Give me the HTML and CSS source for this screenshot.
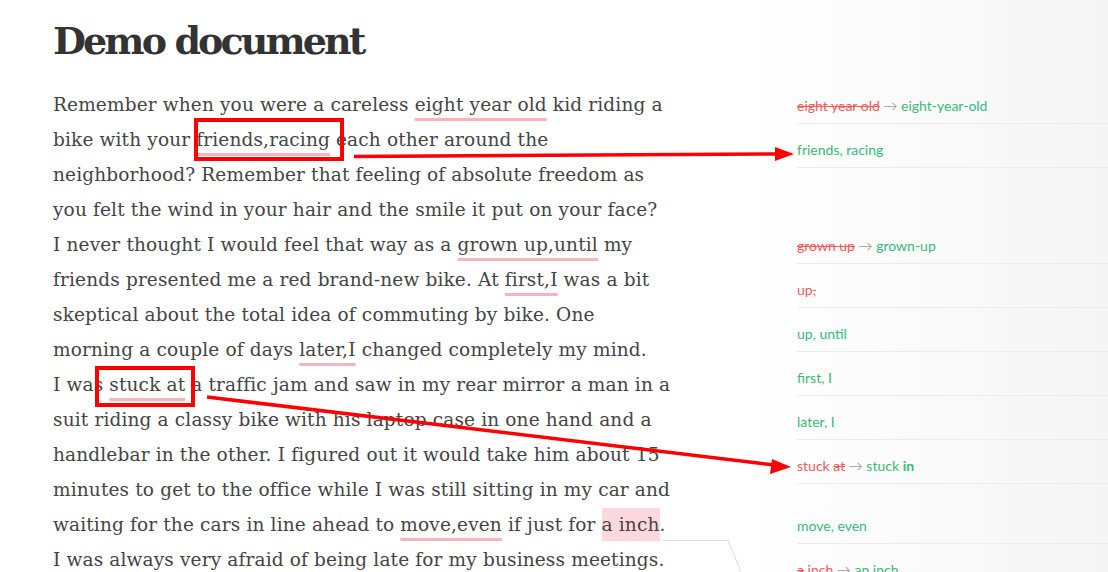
FILE: index.html
```html
<!DOCTYPE html>
<html lang="en">
<head>
    <meta charset="UTF-8">
    <title>Demo document</title>
    <link rel="stylesheet" href="styles.css">
</head>
<body>
    <div class="page">
        <main class="doc">
            <h1>Demo document</h1>
            <p class="text">
                Remember when you were a careless <span class="mark">eight year old</span> kid riding a<br>
                bike with your <span class="mark">friends,racing</span> each other around the<br>
                neighborhood? Remember that feeling of absolute freedom as<br>
                you felt the wind in your hair and the smile it put on your face?<br>
                I never thought I would feel that way as a <span class="mark">grown up</span><span class="mark">,until</span> my<br>
                friends presented me a red brand-new bike. At <span class="mark">first,I</span> was a bit<br>
                skeptical about the total idea of commuting by bike. One<br>
                morning a couple of days <span class="mark">later,I</span> changed completely my mind.<br>
                I was <span class="mark">stuck at</span> a traffic jam and saw in my rear mirror a man in a<br>
                suit riding a classy bike with his laptop case in one hand and a<br>
                handlebar in the other. I figured out it would take him about 15<br>
                minutes to get to the office while I was still sitting in my car and<br>
                waiting for the cars in line ahead to <span class="mark">move,even</span> if just for <span class="hl">a inch</span>.<br>
                I was always very afraid of being late for my business meetings.
            </p>
        </main>

        <aside class="cards">
            <div class="card"><del class="bad">eight year old</del> <span class="to">&rarr;</span> <span class="good">eight-year-old</span></div>
            <div class="card"><span class="good">friends, racing</span></div>
            <div class="card gap-big"><del class="bad">grown up</del> <span class="to">&rarr;</span> <span class="good">grown-up</span></div>
            <div class="card"><span class="bad">up<del>,</del></span></div>
            <div class="card"><span class="good">up, until</span></div>
            <div class="card"><span class="good">first, I</span></div>
            <div class="card"><span class="good">later, I</span></div>
            <div class="card"><span class="bad">stuck <del>at</del></span> <span class="to">&rarr;</span> <span class="good">stuck <b>in</b></span></div>
            <div class="card gap-small"><span class="good">move, even</span></div>
            <div class="card"><span class="bad"><del>a</del> inch</span> <span class="to">&rarr;</span> <span class="good">an inch</span></div>
        </aside>

        <!-- anotaciones rojas encima de la captura -->
        <svg class="marks" width="1108" height="572" viewBox="0 0 1108 572">
            <polyline points="663,540.5 728,540.5 741,572" fill="none" stroke="#dcdcdc" stroke-width="1"/>
            <rect x="196" y="120" width="146" height="39" fill="none" stroke="#f00" stroke-width="4"/>
            <rect x="97" y="368" width="96" height="37" fill="none" stroke="#f00" stroke-width="4"/>
            <line x1="354" y1="156.5" x2="778" y2="154" stroke="#f00" stroke-width="3.5"/>
            <polygon points="775,147 794,154 775,161" fill="#f00"/>
            <line x1="207" y1="397" x2="774" y2="465" stroke="#f00" stroke-width="3.5"/>
            <polygon points="772,459 791,467 770,474" fill="#f00"/>
        </svg>
    </div>
</body>
</html>
```

FILE: styles.css
```css
body {
    margin: 0;
    background: #fff;
}
.page {
    position: relative;
    display: flex;
    height: 572px;
    overflow: hidden;
}
.doc {
    width: 692px;
    padding-left: 53px;
    flex-shrink: 0;
    color: #333;
}
h1 {
    font-family: "DejaVu Serif", serif;
    font-size: 38px;
    font-weight: bold;
    letter-spacing: -2.9px;
    line-height: 48px;
    margin: 17px 0 0;
    color: #333;
}
.text {
    font-family: "DejaVu Serif", serif;
    font-size: 18.5px;
    letter-spacing: 0.15px;
    font-weight: normal;
    line-height: 35px;
    margin: 22px 0 0;
    white-space: nowrap;
    color: #444;
}
.mark {
    text-decoration: underline;
    text-decoration-color: #f9b3bd;
    text-decoration-thickness: 3px;
    text-underline-offset: 7px;
}
.hl {
    background: #fdd9de;
    padding: 6px 0;
}
.cards {
    flex: 1;
    padding: 80px 0 0 52px;
    background: linear-gradient(to right, #fff, #f5f5f5);
    font-family: Lato, "Noto Sans", sans-serif;
    font-size: 14px;
}
.card {
    padding: 18px 0 9px;
    line-height: 16px;
    border-bottom: 1px solid #ececec;
    white-space: nowrap;
}
.gap-big {
    margin-top: 52px;
}
.gap-small {
    margin-top: 16px;
}
.bad {
    color: #ef5b5b;
}
.good {
    color: #38b97b;
}
.good b {
    font-weight: bold;
}
del {
    text-decoration: line-through;
}
.to {
    color: #aaa;
}
.marks {
    position: absolute;
    top: 0;
    left: 0;
    pointer-events: none;
}
```
